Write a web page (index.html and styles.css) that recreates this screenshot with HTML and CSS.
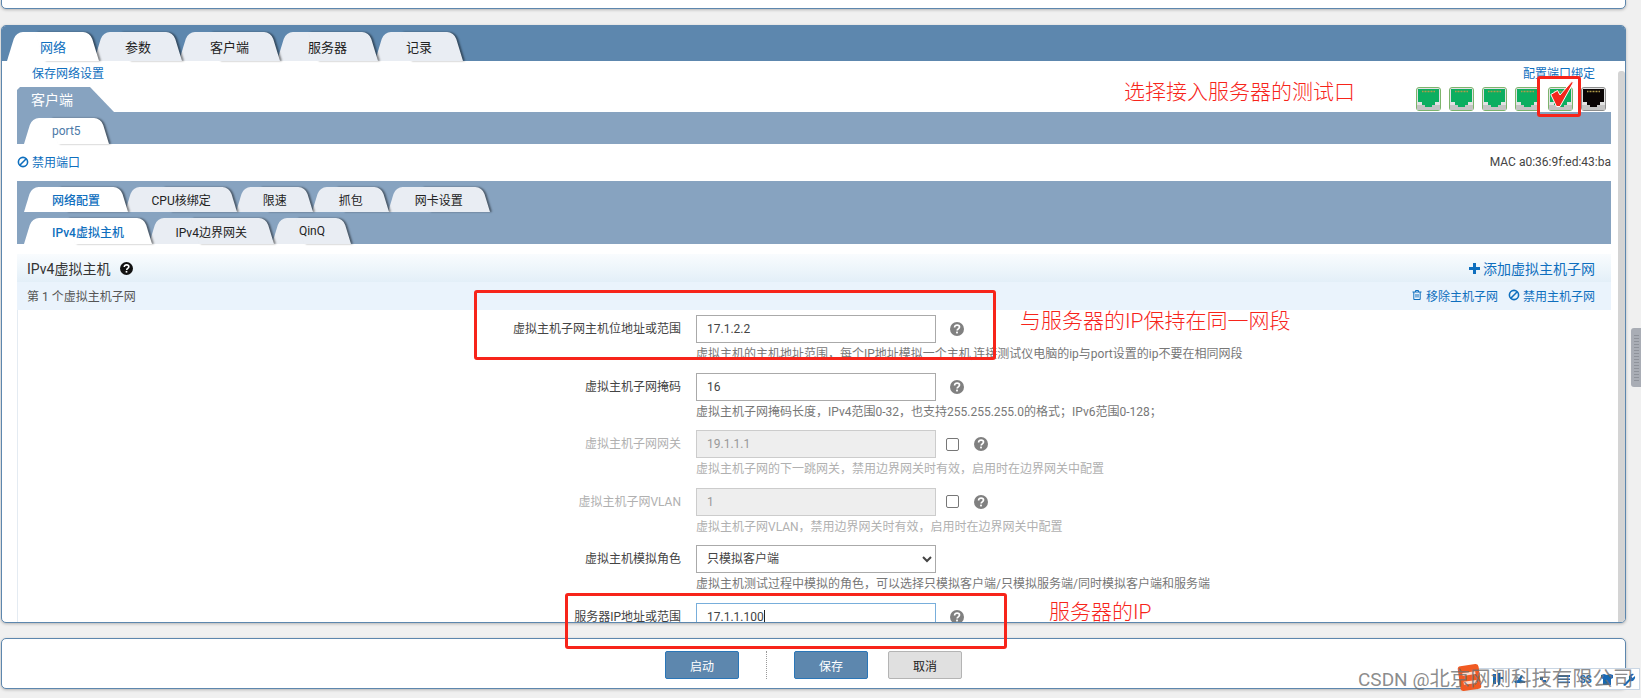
FILE: index.html
```html
<!DOCTYPE html>
<html lang="zh-CN">
<head>
  <meta charset="UTF-8">
  <title>网络配置</title>
  <link rel="stylesheet" href="styles.css">
</head>
<body>
  <svg class="sprite" aria-hidden="true">
    <symbol id="i-help" viewBox="0 0 14 14">
      <circle cx="7" cy="7" r="7" fill="currentColor"/>
      <path d="M4.6 5.4c0-1.5 1.1-2.3 2.5-2.3s2.4.8 2.4 2c0 1.8-2.3 1.7-2.3 3.4" fill="none" stroke="#fff" stroke-width="1.7"/>
      <rect x="6.1" y="9.6" width="1.8" height="1.8" fill="#fff"/>
    </symbol>
    <symbol id="i-ban" viewBox="0 0 12 12">
      <circle cx="6" cy="6" r="4.6" fill="none" stroke="currentColor" stroke-width="1.6"/>
      <path d="M2.8 9.2l6.4-6.4" stroke="currentColor" stroke-width="1.6"/>
    </symbol>
    <symbol id="i-port" viewBox="0 0 25 24">
      <rect x=".5" y=".5" width="24" height="23" rx="2.5" fill="#e2e2e2" stroke="var(--edge)"/>
      <rect x="1" y="18" width="23" height="5" fill="#c4c4c4"/>
      <path d="M2 2h21v13h-4v3h-3v2h-7v-2H6v-3H2z" fill="currentColor"/>
      <path d="M6 4.500h13" stroke="#b09a48" stroke-width="1.500" stroke-dasharray="1 .5"/>
    </symbol>
  </svg>

  <div class="page">
    <div class="top-card"></div>

    <div class="panel">
      <ul class="tabs main-tabs">
        <li class="tab active">网络</li>
        <li class="tab">参数</li>
        <li class="tab">客户端</li>
        <li class="tab">服务器</li>
        <li class="tab">记录</li>
      </ul>

      <div class="panel-body">
        <div class="content">
          <div class="link-row">
            <a class="link">保存网络设置</a>
            <a class="link">配置端口绑定</a>
          </div>

          <div class="client-head">
            <div class="client-tab">客户端</div>
            <div class="ports">
              <svg class="port"><use href="#i-port"/></svg>
              <svg class="port"><use href="#i-port"/></svg>
              <svg class="port"><use href="#i-port"/></svg>
              <svg class="port"><use href="#i-port"/></svg>
              <span class="port-picked">
                <svg class="port"><use href="#i-port"/></svg>
                <svg class="check" viewBox="0 0 24 26"><path d="M.8 13.500L7.500 9.500l2.500 4.500L21.500.8l2 .4L10 25.500H6.500z" fill="#f5261c" stroke="#fff"/></svg>
              </span>
              <svg class="port off"><use href="#i-port"/></svg>
            </div>
          </div>

          <div class="band">
            <ul class="tabs sub-tabs">
              <li class="tab active plain">port5</li>
            </ul>
          </div>

          <div class="status-row">
            <a class="link"><svg class="icon"><use href="#i-ban"/></svg>禁用端口</a>
            <span class="mac">MAC a0:36:9f:ed:43:ba</span>
          </div>

          <div class="band double">
            <ul class="tabs sub-tabs">
              <li class="tab active">网络配置</li>
              <li class="tab">CPU核绑定</li>
              <li class="tab">限速</li>
              <li class="tab">抓包</li>
              <li class="tab">网卡设置</li>
            </ul>
            <ul class="tabs sub-tabs">
              <li class="tab active">IPv4虚拟主机</li>
              <li class="tab">IPv4边界网关</li>
              <li class="tab">QinQ</li>
            </ul>
          </div>

          <div class="section">
            <div class="section-head">
              <span class="section-title">IPv4虚拟主机<svg class="help-black"><use href="#i-help"/></svg></span>
              <a class="link add-link">
                <svg class="plus" viewBox="0 0 11 11"><path d="M4 0h3v4h4v3H7v4H4V7H0V4h4z" fill="currentColor"/></svg>添加虚拟主机子网
              </a>
            </div>
            <div class="subnet-head">
              <span>第 1 个虚拟主机子网</span>
              <div class="subnet-actions">
                <a class="link">
                  <svg class="icon" viewBox="0 0 12 12"><path d="M1.500 3h9M4.500 3V1.500h3V3M2.800 3v7.500h6.400V3M5 5v3.500M7 5v3.500" fill="none" stroke="currentColor"/></svg>移除主机子网
                </a>
                <a class="link"><svg class="icon"><use href="#i-ban"/></svg>禁用主机子网</a>
              </div>
            </div>

            <div class="form">
              <div class="form-row">
                <label class="form-label">虚拟主机子网主机位地址或范围</label>
                <div class="form-main">
                  <div class="field">
                    <input class="text-input" type="text" value="17.1.2.2">
                    <svg class="help"><use href="#i-help"/></svg>
                  </div>
                  <p class="hint">虚拟主机的主机地址范围，每个IP地址模拟一个主机,连接测试仪电脑的ip与port设置的ip不要在相同网段</p>
                </div>
              </div>
              <div class="form-row">
                <label class="form-label">虚拟主机子网掩码</label>
                <div class="form-main">
                  <div class="field">
                    <input class="text-input" type="text" value="16">
                    <svg class="help"><use href="#i-help"/></svg>
                  </div>
                  <p class="hint">虚拟主机子网掩码长度，IPv4范围0-32，也支持255.255.255.0的格式；IPv6范围0-128；</p>
                </div>
              </div>
              <div class="form-row disabled">
                <label class="form-label">虚拟主机子网网关</label>
                <div class="form-main">
                  <div class="field">
                    <input class="text-input" type="text" value="19.1.1.1" disabled>
                    <span class="box"></span>
                    <svg class="help"><use href="#i-help"/></svg>
                  </div>
                  <p class="hint">虚拟主机子网的下一跳网关，禁用边界网关时有效，启用时在边界网关中配置</p>
                </div>
              </div>
              <div class="form-row disabled">
                <label class="form-label">虚拟主机子网VLAN</label>
                <div class="form-main">
                  <div class="field">
                    <input class="text-input" type="text" value="1" disabled>
                    <span class="box"></span>
                    <svg class="help"><use href="#i-help"/></svg>
                  </div>
                  <p class="hint">虚拟主机子网VLAN，禁用边界网关时有效，启用时在边界网关中配置</p>
                </div>
              </div>
              <div class="form-row">
                <label class="form-label">虚拟主机模拟角色</label>
                <div class="form-main">
                  <div class="field">
                    <select class="text-input select-input">
                      <option>只模拟客户端</option>
                    </select>
                  </div>
                  <p class="hint">虚拟主机测试过程中模拟的角色，可以选择只模拟客户端/只模拟服务端/同时模拟客户端和服务端</p>
                </div>
              </div>
              <div class="form-row">
                <label class="form-label">服务器IP地址或范围</label>
                <div class="form-main">
                  <div class="field">
                    <span class="focus-wrap"><input class="text-input focused" type="text" value="17.1.1.100"></span>
                    <svg class="help"><use href="#i-help"/></svg>
                  </div>
                </div>
              </div>
            </div>
          </div>
        </div>
        <div class="inner-scroll"></div>
      </div>
    </div>

    <div class="bottom-card">
      <button class="btn primary">启动</button>
      <span class="btn-divider"></span>
      <button class="btn primary">保存</button>
      <button class="btn cancel">取消</button>
    </div>

    <!-- screenshot annotations -->
    <div class="mark mark-port"></div>
    <div class="mark mark-host"></div>
    <div class="mark mark-server"></div>
    <span class="note note-port">选择接入服务器的测试口</span>
    <span class="note note-host">与服务器的IP保持在同一网段</span>
    <span class="note note-server">服务器的IP</span>

    <div class="page-thumb"></div>

    <div class="toolbar">
      <svg class="tool" viewBox="0 0 14 14"><path d="M2 2h3v10H2zM7 1h2v4h3v2H9v6H7z" fill="currentColor"/></svg>
      <svg class="tool" viewBox="0 0 14 14"><path d="M1 9l4-1 3-5 2 1-2 4 4 1v2H2z" fill="currentColor"/></svg>
      <svg class="tool" viewBox="0 0 14 14"><path d="M5 5h3v3H5zM8 8h3v2H8z" fill="currentColor"/></svg>
      <svg class="tool" viewBox="0 0 14 14"><path d="M1 3h12v2H1zM1 6.500h12v1.500H1zM1 9.500h12V11H1z" fill="currentColor"/></svg>
      <span class="tool-css">SS</span>
      <svg class="tool" viewBox="0 0 14 14"><path d="M1 3l3-1 3 1 3-1 3 1v3l-2 1v6H3V7L1 6z" fill="currentColor"/></svg>
      <svg class="tool" viewBox="0 0 14 14"><path d="M1 13l6-6a4 4 0 0 1 5-5L9.500 4.500l1 1.500L13 4a4 4 0 0 1-5 5l-5 5z" fill="currentColor"/></svg>
    </div>
    <div class="html5-badge"><span class="badge-mark"></span></div>
    <span class="watermark">CSDN @<span class="watermark-name">北京网测科技有限公司</span></span>
  </div>
</body>
</html>
```

FILE: styles.css
```css
* {
  box-sizing: border-box;
}
html, body {
  margin: 0;
  height: 100%;
  overflow: hidden;
}
body {
  font-family: Roboto, "Noto Sans CJK SC", sans-serif;
  font-size: 12px;
  color: #444;
  background-color: #f0f0f0;
}
ul {
  margin: 0;
  padding: 0;
  list-style: none;
}
p {
  margin: 0;
}
.sprite {
  display: none;
}
.page {
  position: relative;
  width: 1641px;
  height: 698px;
  overflow: hidden;
}
.top-card {
  width: 1625px;
  height: 10px;
  margin: -1px 0 0 1px;
  background-color: white;
  border: 1px solid #5d87ae;
  border-radius: 0 0 5px 5px;
  box-shadow: 0 1px 3px rgba(0, 0, 0, 0.25);
}

/* main panel */
.panel {
  width: 1625px;
  height: 598px;
  margin: 16px 0 0 1px;
  background-color: white;
  border: 1px solid #5d87ae;
  border-radius: 5px;
  box-shadow: 0 1px 3px rgba(0, 0, 0, 0.25);
  overflow: hidden;
}
.main-tabs {
  height: 35px;
  padding: 6px 0 0 5px;
  background-color: #5d87ae;
}
.panel-body {
  display: flex;
  height: 561px;
  overflow: hidden;
}
.content {
  flex: 1;
  min-width: 0;
  padding: 0 7px 0 15px;
}
.inner-scroll {
  width: 7px;
  margin-top: 10px;
  background-color: #d4d4d4;
  border-radius: 3px 3px 0 0;
}

/* tabs */
.tabs {
  display: flex;
}
.tab {
  position: relative;
  z-index: 1;
  display: flex;
  align-items: center;
  justify-content: center;
  padding: 0 31px;
  margin-right: -3px;
  color: #222;
  font-size: 13px;
}
.tab:nth-child(1) { z-index: 6; }
.tab:nth-child(2) { z-index: 5; }
.tab:nth-child(3) { z-index: 4; }
.tab:nth-child(4) { z-index: 3; }
.tab:nth-child(5) { z-index: 2; }
.tab::before,
.tab::after {
  content: "";
  position: absolute;
  z-index: -1;
  top: 0;
  bottom: 0;
  background-color: #e9edf3;
  transform-origin: bottom;
}
.tab::before {
  left: 0;
  right: 40%;
  border-radius: 7px 0 0 0;
  transform: skewX(-17deg);
}
.tab::after {
  left: 40%;
  right: 0;
  border-radius: 0 7px 0 0;
  box-shadow: 2px 0 2px rgba(0, 0, 0, 0.45);
  transform: skewX(17deg);
}
.tab.active {
  padding: 0 33px;
  margin-right: -5px;
  color: #0f6fbe;
}
.tab.active::before,
.tab.active::after {
  background-color: white;
}
.sub-tabs {
  height: 26px;
  margin-left: 7px;
}
.sub-tabs .tab {
  padding: 0 26.5px;
  margin-right: -1px;
  font-size: 12px;
}
.sub-tabs .tab.active {
  padding: 0 28px;
  margin-right: -3px;
  font-weight: 500;
}
.sub-tabs .tab.plain {
  font-weight: normal;
  color: #4d7aa8;
}

/* top of the panel body */
.link {
  display: inline-flex;
  align-items: center;
  color: #0f6fbe;
  text-decoration: none;
}
.link-row {
  display: flex;
  justify-content: space-between;
  height: 26px;
  padding: 0 16px 0 15px;
  line-height: 17px;
}
.client-head {
  display: flex;
  justify-content: space-between;
  height: 25px;
}
.client-tab {
  width: 97px;
  padding: 2px 0 0 14px;
  font-size: 14px;
  color: white;
  background-color: #87a3c0;
  clip-path: polygon(0 3px, 3px 0, 73px 0, 100% 100%, 0 100%);
}
.ports {
  display: flex;
  gap: 8px;
  padding-right: 5px;
}
.port {
  display: block;
  width: 25px;
  height: 24px;
  color: #0cae60;
  --edge: #7db46c;
}
.port.off {
  color: #0a0505;
  --edge: #8d8d8d;
}
.port-picked {
  position: relative;
}
.check {
  position: absolute;
  left: 2px;
  top: -6px;
  width: 24px;
  height: 26px;
}
.band {
  height: 32px;
  padding-top: 6px;
  background-color: #87a3c0;
}
.band.double {
  display: flex;
  flex-direction: column;
  gap: 6px;
  height: 63px;
}
.band.double .sub-tabs:first-child {
  height: 25px;
}
.status-row {
  display: flex;
  align-items: center;
  justify-content: space-between;
  height: 37px;
  padding-bottom: 2px;
}
.mac {
  color: #444;
}
.icon {
  width: 12px;
  height: 12px;
  margin-right: 3px;
}

/* section */
.section {
  margin-top: 10px;
}
.section-head,
.subnet-head {
  display: flex;
  align-items: center;
  justify-content: space-between;
  height: 28px;
  padding: 0 16px 0 10px;
}
.section-head {
  font-size: 14px;
  background: linear-gradient(#f9fcfe, #e3eff8);
}
.section-title {
  display: flex;
  align-items: center;
  color: #333;
}
.help-black {
  width: 13px;
  height: 13px;
  margin-left: 10px;
  color: #111;
}
.plus {
  width: 11px;
  height: 11px;
  margin-right: 3px;
}
.subnet-head {
  padding-bottom: 2px;
  background-color: #eaf3fc;
  color: #555;
}
.subnet-actions {
  display: flex;
  gap: 10px;
}
.form {
  padding-top: 5px;
  border-left: 1px solid #e4ebf2;
}
.form-row {
  display: flex;
  gap: 15px;
  height: 57.6px;
}
.form-label {
  width: 663px;
  line-height: 28px;
  text-align: right;
  color: #444;
}
.field {
  display: flex;
  align-items: center;
  height: 28px;
}
.text-input {
  width: 240px;
  height: 28px;
  padding: 0 10px;
  font-family: inherit;
  font-size: 12px;
  color: #444;
  background-color: white;
  border: 1px solid #aaa;
  border-radius: 0;
  outline: none;
}
.text-input:disabled {
  color: #999;
  background-color: #eee;
  border-color: #ccc;
}
.select-input {
  padding: 0 6px;
}
.focus-wrap {
  position: relative;
  display: block;
}
.text-input.focused {
  display: block;
  border-color: #78aedb;
}
.focus-wrap::after {
  content: "";
  position: absolute;
  left: 68px;
  top: 7px;
  width: 1px;
  height: 15px;
  background-color: #222;
}
.help {
  width: 14px;
  height: 14px;
  margin-left: 14px;
  color: #808080;
}
.box {
  width: 13px;
  height: 13px;
  margin-left: 10px;
  background-color: white;
  border: 1px solid #777;
  border-radius: 2px;
}
.box + .help {
  margin-left: 15px;
}
.hint {
  margin-top: 3px;
  line-height: 17px;
  color: #777;
  white-space: nowrap;
}
.disabled .form-label,
.disabled .hint {
  color: #b0b0b0;
}

/* bottom bar */
.bottom-card {
  display: flex;
  justify-content: center;
  width: 1625px;
  height: 51px;
  margin: 15px 0 0 1px;
  padding-top: 12px;
  background-color: white;
  border: 1px solid #5d87ae;
  border-radius: 5px;
  box-shadow: 0 1px 3px rgba(0, 0, 0, 0.25);
}
.btn {
  width: 74px;
  height: 28px;
  font-family: inherit;
  font-size: 12px;
  border-radius: 2px;
}
.btn.primary {
  color: white;
  background-color: #5d87ae;
  border: 1px solid #2a76b8;
}
.btn.cancel {
  margin-left: 20px;
  color: #222;
  background-color: #e0e0e0;
  border: 1px solid #b4b4b4;
}
.btn-divider {
  height: 28px;
  margin: 0 27px;
  border-left: 1px dotted #999;
}

/* annotations sit over the screenshot */
.mark {
  position: absolute;
  border: 3px solid #f7241a;
  border-radius: 3px;
}
.mark-port {
  left: 1537px;
  top: 76px;
  width: 44px;
  height: 41px;
}
.mark-host {
  left: 474px;
  top: 290px;
  width: 522px;
  height: 70px;
}
.mark-server {
  left: 565px;
  top: 593px;
  width: 442px;
  height: 56px;
}
.note {
  position: absolute;
  font-size: 21px;
  line-height: 28px;
  font-weight: 300;
  color: #f7241a;
  white-space: nowrap;
}
.note-port {
  left: 1124px;
  top: 78px;
}
.note-host {
  left: 1020px;
  top: 307px;
}
.note-server {
  left: 1049px;
  top: 598px;
}
.page-thumb {
  position: absolute;
  left: 1631px;
  top: 328px;
  width: 10px;
  height: 59px;
  background: repeating-linear-gradient(#8f939b 0 1px, #a9adb5 1px 3px) center / 5px 46px no-repeat #a9adb5;
  border-radius: 3px 0 0 3px;
}

/* csdn overlay */
.toolbar {
  position: absolute;
  left: 1478px;
  top: 668px;
  display: flex;
  align-items: center;
  justify-content: space-between;
  width: 162px;
  height: 22px;
  padding: 0 3px 0 12px;
  color: #1669b5;
  background-color: white;
  border: 1px solid #c9d6e4;
}
.tool {
  width: 14px;
  height: 14px;
}
.tool-css {
  font-size: 10px;
  font-weight: bold;
}
.html5-badge {
  position: absolute;
  left: 1459px;
  top: 665px;
  display: flex;
  align-items: center;
  justify-content: center;
  width: 21px;
  height: 25px;
  background-color: #f15a22;
  border-radius: 3px;
  transform: rotate(-8deg);
}
.badge-mark {
  width: 13px;
  height: 12px;
  border-top: 3px solid #ffd9c9;
  border-bottom: 3px solid #ffd9c9;
}
.watermark {
  position: absolute;
  left: 1358px;
  top: 665px;
  font-size: 19px;
  line-height: 28px;
  color: rgba(110, 110, 110, 0.8);
  white-space: nowrap;
}
.watermark-name {
  font-size: 20.4px;
}
```
